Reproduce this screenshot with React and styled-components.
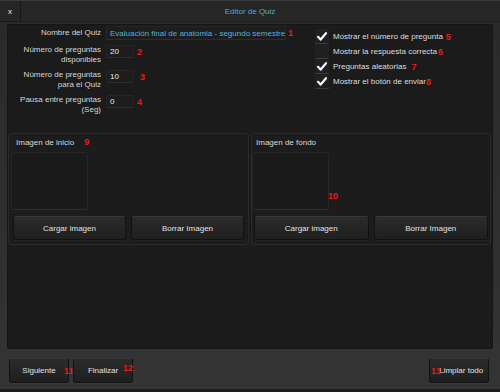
import React from "react";
import styled, { createGlobalStyle } from "styled-components";

const GlobalStyle = createGlobalStyle`
  html, body { margin: 0; padding: 0; background: #2c2c2c; }
  * { box-sizing: border-box; }
`;

const Window = styled.div`
  width: 500px;
  height: 392px;
  display: flex;
  flex-direction: column;
  background: linear-gradient(#292929, #343434);
  border-bottom: 3px solid #1e1e1e;
  font-family: "Liberation Sans", Arial, sans-serif;
  font-size: 8px;
  color: #dcdcdc;
  overflow: hidden;
`;

const TitleBar = styled.header`
  height: 22px;
  display: flex;
  align-items: stretch;
  background: #262626;
  border-top: 1px solid #3a3a3a;
`;

const CloseButton = styled.div`
  width: 21px;
  display: flex;
  align-items: center;
  justify-content: center;
  border-right: 1px solid #171717;
  border-bottom: 1px solid #171717;
  color: #e8e8e8;
  font-size: 8px;
`;

const Title = styled.div`
  flex: 1;
  display: flex;
  align-items: center;
  justify-content: center;
  padding-right: 21px;
  color: #52a8d0;
  border-bottom: 1px solid #1f1f1f;
`;

const MainPanel = styled.main`
  margin: 2px 7px 0;
  height: 325px;
  background: #1b1b1b;
  border: 1px solid #151515;
  border-radius: 2px;
  display: flex;
  flex-direction: column;
`;

const FormSection = styled.section`
  height: 108px;
  display: flex;
`;

const FieldList = styled.div`
  width: 307px;
  padding-top: 1px;
  display: flex;
  flex-direction: column;
  gap: 5px;
`;

const FieldRow = styled.div`
  display: grid;
  grid-template-columns: 93px auto;
  column-gap: 5px;
  align-items: ${(p) => (p.$center ? "center" : "start")};
`;

const FieldLabel = styled.div`
  text-align: right;
  line-height: 10px;
  color: #d6d6d6;
`;

const InputWrap = styled.div`
  display: flex;
  align-items: center;
`;

const TextBox = styled.div`
  width: ${(p) => p.$width}px;
  height: ${(p) => p.$height}px;
  display: flex;
  align-items: center;
  padding-left: 3px;
  background: #1d1d1d;
  border: 1px solid #262626;
  border-bottom-color: #2c2c2c;
  border-radius: 2px;
  color: ${(p) => (p.$accent ? "#58b0d8" : "#ececec")};
  white-space: nowrap;
`;

const Caret = styled.span`
  display: inline-block;
  width: 1px;
  height: 11px;
  margin-left: 1px;
  background: #f0f0f0;
`;

const Mark = styled.span`
  color: #e41b1b;
  font-weight: bold;
  font-size: 9px;
  margin-left: ${(p) => p.$gap || 0}px;
  line-height: 10px;
`;

const Badge = styled(Mark)`
  position: absolute;
  left: ${(p) => p.$left}px;
  top: ${(p) => p.$top}px;
  margin: 0;
`;

const OptionList = styled.div`
  padding-top: 4px;
  display: flex;
  flex-direction: column;
`;

const Option = styled.label`
  height: 15px;
  display: flex;
  align-items: center;
  color: #dedede;
`;

const CheckBox = styled.span`
  width: 14px;
  height: 15px;
  margin-right: 4px;
  display: flex;
  align-items: center;
  justify-content: center;
  background: #202020;
  border-bottom: 1px solid #3a3a3a;
  border-radius: 1px;
`;

const ImageRow = styled.section`
  display: grid;
  grid-template-columns: 241px 240px;
  column-gap: 2px;
`;

const ImageCard = styled.div`
  height: 112px;
  display: flex;
  flex-direction: column;
  background: #1c1c1c;
  border: 1px solid #2a2a2a;
  border-radius: 3px;
  padding: 3px ${(p) => p.$inset}px 0;
`;

const CardTitle = styled.div`
  height: 14px;
  line-height: 12px;
  padding-left: ${(p) => p.$indent}px;
  color: #d8d8d8;
`;

const PreviewWrap = styled.div`
  position: relative;
  height: 58px;
  margin-top: 1px;
`;

const Preview = styled.div`
  width: 77px;
  height: 58px;
  background: #1a1a1a;
  border: 1px solid #262626;
  border-bottom-color: #2e2e2e;
  border-radius: 3px;
`;

const ButtonPair = styled.div`
  display: grid;
  grid-template-columns: 1fr 1fr;
  column-gap: 5px;
  margin-top: 6px;
  padding: 0 ${(p) => p.$pad}px;
`;

const Button = styled.button`
  position: relative;
  height: ${(p) => p.$height || 24}px;
  width: ${(p) => (p.$width ? `${p.$width}px` : "auto")};
  padding: 0;
  font-family: "Liberation Sans", Arial, sans-serif;
  font-size: 8px;
  color: #e2e2e2;
  background: linear-gradient(#2b2b2b, #1f1f1f);
  border: 1px solid #121212;
  border-top-color: #383838;
  border-radius: 3px;
  box-shadow: 0 1px 0 rgba(255, 255, 255, 0.04);
`;

const Footer = styled.footer`
  flex: 1;
  display: flex;
  align-items: flex-start;
  gap: 4px;
  padding: 9px 11px 0 9px;
`;

const Spacer = styled.div`
  flex: 1;
`;

function Check() {
  return (
    <svg width="10" height="9" viewBox="0 0 10 9">
      <path d="M1 4.8 L3.6 7.6 L9 1.2" fill="none" stroke="#fff" strokeWidth="2.2" strokeLinecap="round" strokeLinejoin="round" />
    </svg>
  );
}

const options = [
  { label: "Mostrar el número de pregunta", checked: true, mark: "5", gap: 3 },
  { label: "Mostrar la respuesta correcta", checked: false, mark: "6", gap: 1 },
  { label: "Preguntas aleatorias", checked: true, mark: "7", gap: 5 },
  { label: "Mostrar el botón de enviar", checked: true, mark: "8", gap: 0 },
];

export default function App() {
  return (
    <>
      <GlobalStyle />
      <Window>
        <TitleBar>
          <CloseButton>x</CloseButton>
          <Title>Editor de Quiz</Title>
        </TitleBar>

        <MainPanel>
          <FormSection>
            <FieldList>
              <FieldRow $center>
                <FieldLabel>Nombre del Quiz</FieldLabel>
                <InputWrap>
                  <TextBox $width={180} $height={14} $accent>
                    Evaluación final de anatomia - segundo semestre
                    <Caret />
                  </TextBox>
                  <Mark $gap={2}>1</Mark>
                </InputWrap>
              </FieldRow>
              <FieldRow>
                <FieldLabel>
                  Número de preguntas
                  <br />
                  disponibles
                </FieldLabel>
                <InputWrap>
                  <TextBox $width={28} $height={13}>20</TextBox>
                  <Mark $gap={3}>2</Mark>
                </InputWrap>
              </FieldRow>
              <FieldRow>
                <FieldLabel>
                  Número de preguntas
                  <br />
                  para el Quiz
                </FieldLabel>
                <InputWrap>
                  <TextBox $width={28} $height={13}>10</TextBox>
                  <Mark $gap={6}>3</Mark>
                </InputWrap>
              </FieldRow>
              <FieldRow>
                <FieldLabel>
                  Pausa entre preguntas
                  <br />
                  (Seg)
                </FieldLabel>
                <InputWrap>
                  <TextBox $width={28} $height={13}>0</TextBox>
                  <Mark $gap={3}>4</Mark>
                </InputWrap>
              </FieldRow>
            </FieldList>

            <OptionList>
              {options.map((o) => (
                <Option key={o.label}>
                  <CheckBox>{o.checked && <Check />}</CheckBox>
                  {o.label}
                  <Mark $gap={o.gap}>{o.mark}</Mark>
                </Option>
              ))}
            </OptionList>
          </FormSection>

          <ImageRow>
            <ImageCard $inset={2}>
              <CardTitle $indent={5}>
                Imagen de inicio<Mark $gap={10}>9</Mark>
              </CardTitle>
              <PreviewWrap>
                <Preview />
              </PreviewWrap>
              <ButtonPair $pad={2}>
                <Button>Cargar imagen</Button>
                <Button>Borrar Imagen</Button>
              </ButtonPair>
            </ImageCard>
            <ImageCard $inset={0}>
              <CardTitle $indent={4}>Imagen de fondo</CardTitle>
              <PreviewWrap>
                <Preview />
                <Badge $left={76} $top={39}>10</Badge>
              </PreviewWrap>
              <ButtonPair $pad={2}>
                <Button>Cargar imagen</Button>
                <Button>Borrar Imagen</Button>
              </ButtonPair>
            </ImageCard>
          </ImageRow>
        </MainPanel>

        <Footer>
          <Button $width={60} $height={25}>
            Siguiente
            <Badge $left={54} $top={7}>11</Badge>
          </Button>
          <Button $width={60} $height={25}>
            Finalizar
            <Badge $left={49} $top={4}>12</Badge>
          </Button>
          <Spacer />
          <Button $width={60} $height={25}>
            &nbsp;&nbsp;Limpiar todo
            <Badge $left={1} $top={7}>13</Badge>
          </Button>
        </Footer>
      </Window>
    </>
  );
}
